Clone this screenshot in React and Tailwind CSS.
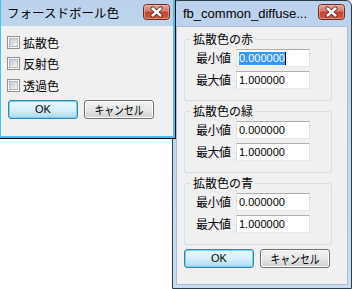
import React from "react";

const JP = { fontFamily: '"Noto Sans CJK JP", sans-serif' };
const LAT = { fontFamily: '"Liberation Sans", "Noto Sans CJK JP", sans-serif' };

function CloseButton() {
  return (
    <svg width="27" height="16" viewBox="0 0 27 16">
      <defs>
        <linearGradient id="cbg" x1="0" y1="0" x2="0" y2="1">
          <stop offset="0" stopColor="#e9a99b" />
          <stop offset="0.45" stopColor="#d47766" />
          <stop offset="0.5" stopColor="#c2412d" />
          <stop offset="1" stopColor="#cf5a3f" />
        </linearGradient>
      </defs>
      <rect x="0.5" y="0.5" width="26" height="15" rx="3" fill="url(#cbg)" stroke="#6b2a22" />
      <rect x="1.5" y="1.5" width="24" height="13" rx="2" fill="none" stroke="#f0b8aa" strokeOpacity="0.6" />
      <path d="M9.5 4.5 L17.5 11.5 M17.5 4.5 L9.5 11.5" stroke="#5a2a25" strokeWidth="4.2" strokeLinecap="round" />
      <path d="M9.5 4.5 L17.5 11.5 M17.5 4.5 L9.5 11.5" stroke="#ffffff" strokeWidth="2.4" strokeLinecap="round" />
    </svg>
  );
}

function Checkbox({ label }) {
  return (
    <div className="flex items-center h-[13px]">
      <div className="w-[13px] h-[13px] border border-[#8e8f8f] bg-white p-[1px] box-border">
        <div className="w-full h-full bg-gradient-to-br from-[#c5c9cf] to-[#f5f5f5] border border-[#b4b8bd] box-border" />
      </div>
      <span className="ml-[3px] text-[12px] leading-[14px] text-black" style={JP}>{label}</span>
    </div>
  );
}

function WinButton({ def, children, narrow }) {
  return (
    <div
      className={
        "w-[70px] h-[19px] rounded-[3px] border flex items-center justify-center box-border " +
        (def
          ? "border-[#3c7fb1] shadow-[inset_0_0_0_1px_#74d6f7] bg-gradient-to-b from-[#eaf6fd] via-[#d9f0fc] to-[#a7d9f5]"
          : "border-[#707070] shadow-[inset_0_0_0_1px_#fcfcfc] bg-gradient-to-b from-[#f2f2f2] via-[#e8e8e8] to-[#cfcfcf]")
      }
    >
      {narrow ? (
        <span className="inline-block whitespace-nowrap text-[12px] leading-[14px] text-black scale-x-[0.82]" style={JP}>{children}</span>
      ) : (
        <span className="text-[11px] leading-[13px] text-black" style={LAT}>{children}</span>
      )}
    </div>
  );
}

function Field({ label, value, selected }) {
  return (
    <div className="flex items-center h-[18px]">
      <span className="w-[51px] shrink-0 whitespace-nowrap pl-[11px] text-[12px] leading-[14px] text-black tracking-[-0.5px]" style={JP}>{label}</span>
      <div className="w-[74px] h-[18px] bg-white border border-[#abadb3] border-l-[#dbdfe6] border-r-[#dbdfe6] border-b-[#e3e9ef] box-border flex items-center pl-[2px]">
        {selected ? (
          <>
            <span className="bg-[#3399ff] text-white text-[11px] leading-[13px]" style={LAT}>{value}</span>
            <span className="w-[1px] h-[13px] bg-black" />
          </>
        ) : (
          <span className="text-black text-[11px] leading-[13px]" style={LAT}>{value}</span>
        )}
      </div>
    </div>
  );
}

function Group({ title, sel }) {
  return (
    <fieldset className="h-[69px] border border-[#d5dfe5] rounded-[3px] box-border mx-[7px] w-[148px]">
      <legend className="ml-[6px] px-[2px] text-[12px] leading-[14px] text-black" style={JP}>{title}</legend>
      <div className="flex flex-col gap-[4px] pt-[3px]">
        <Field label="最小値" value="0.000000" selected={sel} />
        <Field label="最大値" value="1.000000" />
      </div>
    </fieldset>
  );
}

export default function App() {
  return (
    <div className="relative w-[352px] h-[289px] bg-white overflow-hidden">
      {/* Right window */}
      <div className="absolute left-[172px] top-0 w-[180px] h-[289px] border border-[#2e3b48] rounded-tl-[6px] rounded-tr-[6px] bg-gradient-to-b from-[#bcd2ec] to-[#c9dcf1] flex flex-col box-border">
        <div className="h-[25px] flex items-center justify-between pl-[10px] pr-[6px] shrink-0">
          <span className="text-[13px] leading-[16px] text-black" style={LAT}>fb_common_diffuse...</span>
          <div className="mt-[-3px]"><CloseButton /></div>
        </div>
        <div className="mx-[3px] mb-[3px] flex-1 bg-[#f0f0f0] border border-[#a9bdd6] box-border pt-[5px]">
          <div className="flex flex-col gap-[3px]">
            <Group title="拡散色の赤" sel />
            <Group title="拡散色の緑" />
            <Group title="拡散色の青" />
          </div>
          <div className="flex gap-[6px] pl-[7px] mt-[4px]">
            <WinButton def>OK</WinButton>
            <WinButton narrow>キャンセル</WinButton>
          </div>
        </div>
      </div>

      {/* Left window */}
      <div className="absolute left-0 top-0 w-[176px] h-[139px] border-r border-b border-black box-border z-10">
        <div className="w-full h-full border-l border-r-2 border-b-2 border-[#3ec4ef] box-border flex flex-col bg-gradient-to-b from-[#bcd2ec] to-[#c9dcf1]">
          <div className="h-[26px] flex items-center justify-between pl-[6px] pr-[3px] shrink-0">
            <span className="text-[12.5px] leading-[16px] text-black" style={JP}>フォースドボール色</span>
            <div className="mt-[-3px]"><CloseButton /></div>
          </div>
          <div className="flex-1 bg-[#f0f0f0] pl-[6px] pt-[10px]">
            <Checkbox label="拡散色" />
            <div className="mt-[8px]"><Checkbox label="反射色" /></div>
            <div className="mt-[9px]"><Checkbox label="透過色" /></div>
            <div className="flex gap-[6px] pl-[1px] mt-[8px]">
              <WinButton def>OK</WinButton>
              <WinButton narrow>キャンセル</WinButton>
            </div>
          </div>
        </div>
      </div>
    </div>
  );
}
